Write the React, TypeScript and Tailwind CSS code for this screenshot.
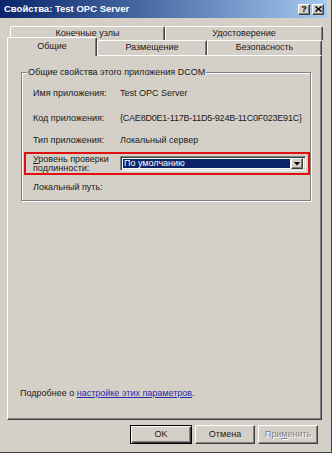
import React from "react";

const raised =
  "bg-[#d4d0c8] border-t border-l border-t-white border-l-white border-r border-b border-r-[#404040] border-b-[#404040] shadow-[inset_-1px_-1px_0_#808080]";

function Tab({ label, w, h, selected }: { label: string; w: number; h: string; selected?: boolean }) {
  return (
    <div
      style={{ width: w }}
      className={`${h} shrink-0 flex items-start justify-center bg-[#d4d0c8] border-t border-l border-t-white border-l-white border-r border-r-[#404040] rounded-t-[2px] shadow-[inset_-1px_0_0_#808080] ${
        selected ? "relative z-10 -mb-[1px] pt-[3px]" : "pt-[1px]"
      }`}
    >
      <span className="leading-[11px]">{label}</span>
    </div>
  );
}

function Row({ label, value, mt, tight }: { label: string; value?: string; mt: string; tight?: boolean }) {
  return (
    <div className={`flex h-[12px] leading-[12px] pl-[11px] ${mt}`}>
      <div className="w-[87px] shrink-0">{label}</div>
      {value && <div className={`whitespace-nowrap ${tight ? "tracking-[-0.22px]" : ""}`}>{value}</div>}
    </div>
  );
}

function Btn({ children, w, def }: { children: React.ReactNode; w: string; def?: boolean }) {
  if (def) {
    return (
      <div
        className={`${w} h-[19px] flex items-center justify-center bg-[#d4d0c8] border border-black shadow-[inset_1px_1px_0_#fff,inset_-1px_-1px_0_#404040,inset_-2px_-2px_0_#808080]`}
      >
        {children}
      </div>
    );
  }
  return <div className={`${w} h-[19px] flex items-center justify-center ${raised}`}>{children}</div>;
}

export default function App() {
  return (
    <div className="w-[332px] h-[453px] bg-[#d4d0c8] flex flex-col font-['Liberation_Sans',Arial,sans-serif] text-[9px] text-[#1a1a1a] border-r border-b border-r-[#404040] border-b-[#404040] overflow-hidden">
      {/* Title bar */}
      <div className="h-[18px] mr-[4px] flex items-center bg-linear-to-r from-[#0a246a] to-[#a6caf0] pl-[4px] pr-[3px]">
        <span className="text-white font-bold text-[9.5px] leading-[12px]">Свойства: Test OPC Server</span>
        <div className="ml-auto flex gap-[2px]">
          <div className={`w-[12px] h-[11px] flex items-center justify-center ${raised}`}>
            <span className="text-[9px] font-bold leading-[9px] text-black">?</span>
          </div>
          <div className={`w-[12px] h-[11px] flex items-center justify-center ${raised}`}>
            <svg width="7" height="6" viewBox="0 0 7 6">
              <path d="M0.5 0.5 L6.5 5.5 M6.5 0.5 L0.5 5.5" stroke="#000" strokeWidth="1.5" />
            </svg>
          </div>
        </div>
      </div>

      {/* Tabs */}
      <div className="mt-[8px] ml-[7px] w-[315px] flex flex-col">
        <div className="flex ml-[3px] h-[14px]">
          <Tab label="Конечные узлы" w={155} h="h-[14px]" />
          <Tab label="Удостоверение" w={158} h="h-[14px]" />
        </div>
        <div className="flex h-[15px] items-end">
          <Tab label="Общие" w={90} h="h-[19px]" selected />
          <Tab label="Размещение" w={110} h="h-[15px]" />
          <Tab label="Безопасность" w={115} h="h-[15px]" />
        </div>
      </div>

      {/* Panel */}
      <div className="ml-[7px] w-[315px] h-[365px] flex flex-col border-t border-l border-t-white border-l-white border-r border-b border-r-[#404040] border-b-[#404040] shadow-[inset_-1px_-1px_0_#808080]">
        <div className="relative mt-[16px] ml-[13px] w-[290px] h-[129px] border border-[#808080] shadow-[inset_1px_1px_0_#fff,1px_1px_0_#fff]">
          <span className="absolute left-[5px] -top-[6px] px-[1px] bg-[#d4d0c8] leading-[10px] whitespace-nowrap">
            Общие свойства этого приложения DCOM
          </span>
          <Row label="Имя приложения:" value="Test OPC Server" mt="mt-[14px]" />
          <Row label="Код приложения:" value="{CAE8D0E1-117B-11D5-924B-11C0F023E91C}" mt="mt-[13px]" tight />
          <Row label="Тип приложения:" value="Локальный сервер" mt="mt-[10px]" />
          <div className="mt-[6px] ml-[2px] w-[286px] h-[23px] border-2 border-[#e01010] flex items-center pl-[7px] pr-[2px]">
            <div className="w-[87px] shrink-0 leading-[9px] self-start pt-[1px]">
              <span className="underline">У</span>ровень проверки
              <br />
              подлинности:
            </div>
            <div className="w-[186px] h-[15px] flex bg-white border-t border-l border-t-[#808080] border-l-[#808080] border-r border-b border-r-white border-b-white shadow-[inset_1px_1px_0_#404040,inset_-1px_-1px_0_#d4d0c8] p-[2px]">
              <div className="flex-1 bg-[#0a246a] text-white leading-[9px] pl-[1px] mr-[1px]">По умолчанию</div>
              <div className={`w-[12px] -my-[1px] flex items-center justify-center ${raised}`}>
                <svg width="6" height="4" viewBox="0 0 6 4">
                  <polygon points="0,0 6,0 3,3.5" fill="#000" />
                </svg>
              </div>
            </div>
          </div>
          <Row label="Локальный путь:" mt="mt-[6px]" />
        </div>
        <div className="flex-1" />
        <div className="ml-[12px] mb-[20px] leading-[12px]">
          Подробнее о <span className="underline text-[#2a2aa8]">настройке этих параметров</span>.
        </div>
      </div>

      {/* Buttons */}
      <div className="mt-[5px] ml-[130px] flex gap-[3px]">
        <Btn w="w-[62px]" def>
          OK
        </Btn>
        <Btn w="w-[60px]">Отмена</Btn>
        <Btn w="w-[60px]">
          <span className="text-[#808080] [text-shadow:1px_1px_0_#fff]">
            При<span className="underline">м</span>енить
          </span>
        </Btn>
      </div>
    </div>
  );
}
